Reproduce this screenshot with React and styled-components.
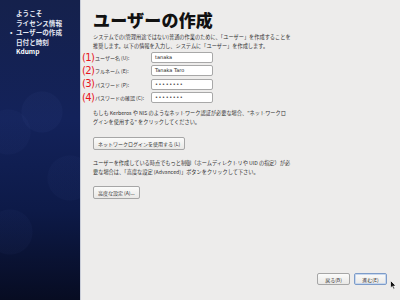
import React from 'react'
import styled, { createGlobalStyle } from 'styled-components'

const Global = createGlobalStyle`
  body {
    margin: 0;
    font-family: "Noto Sans CJK JP", "DejaVu Sans", sans-serif;
  }
`

const Screen = styled.div`
  display: flex;
  width: 400px;
  height: 300px;
  overflow: hidden;
  background: #edeceb;
`

const Sidebar = styled.nav`
  width: 80px;
  flex: none;
  display: flex;
  flex-direction: column;
  gap: 0.5px;
  padding-top: 9px;
  box-sizing: border-box;
  background:
    radial-gradient(circle at 42px 112px, rgba(70, 90, 160, 0.08) 0 20px, transparent 21px),
    radial-gradient(circle at 8px 132px, rgba(70, 90, 160, 0.06) 0 22px, transparent 23px),
    radial-gradient(circle at 70px 178px, rgba(70, 90, 160, 0.06) 0 22px, transparent 23px),
    radial-gradient(circle at 10px 232px, rgba(70, 90, 160, 0.06) 0 22px, transparent 23px),
    linear-gradient(180deg, #15214c 0%, #13225a 40%, #0d1a48 70%, #070c22 100%);
`

const Step = styled.div`
  position: relative;
  padding-left: 16px;
  height: 9px;
  line-height: 9px;
  font-size: 6.6px;
  font-weight: bold;
  color: ${p => (p.$strong ? '#ffffff' : '#e4e8f2')};
  white-space: nowrap;

  &::before {
    content: ${p => (p.$current ? "'•'" : "''")};
    position: absolute;
    left: 10px;
  }
`

const Main = styled.main`
  flex: 1;
  display: flex;
  flex-direction: column;
  border-left: 1px solid #c9cdd8;
  padding: 8px 13px 15px 12px;
  color: #333;
`

const Title = styled.h1`
  margin: 0;
  font-size: 17px;
  line-height: 24px;
  font-weight: 900;
  color: #111;
  letter-spacing: 0.2px;
`

const Text = styled.p`
  margin: ${p => p.$top || 0}px 0 0;
  font-size: 5.2px;
  line-height: 8.5px;
  white-space: nowrap;
`

const Form = styled.div`
  display: grid;
  grid-template-columns: 12px 57px 62px;
  grid-auto-rows: 13.3px;
  align-items: center;
  margin: 1px 0 0 -11px;
`

const Mark = styled.span`
  font-family: "DejaVu Sans", sans-serif;
  font-size: 10px;
  color: #e8141c;
  line-height: 1;
  letter-spacing: -0.6px;
`

const Label = styled.label`
  font-size: 5px;
  padding-left: 1px;
  white-space: nowrap;
`

const Field = styled.div`
  height: 11px;
  box-sizing: border-box;
  border: 1px solid #a8a8a8;
  border-radius: 2px;
  background: #fff;
  font-family: "DejaVu Sans", sans-serif;
  font-size: 5px;
  line-height: 9px;
  padding-left: 3px;
  color: #222;
  letter-spacing: ${p => (p.$secret ? '0.6px' : '0')};
`

const Button = styled.button`
  display: block;
  height: 13px;
  padding: 0 4px;
  margin-top: ${p => p.$top || 0}px;
  align-self: flex-start;
  box-sizing: border-box;
  border: 1px solid ${p => (p.$focus ? '#7d9cc9' : '#a6a6a6')};
  border-radius: 2px;
  background: linear-gradient(#fbfbfa, #e9e8e6);
  font-family: "Noto Sans CJK JP", sans-serif;
  font-size: 5px;
  color: #333;
  white-space: nowrap;
  box-shadow: ${p => (p.$focus ? 'inset 0 0 0 1px #c7d7ee' : 'none')};
`

const Footer = styled.div`
  margin-top: auto;
  display: flex;
  justify-content: flex-end;
  gap: 4px;
  position: relative;
`

const NavButton = styled(Button)`
  width: 33px;
  height: 12px;
  padding: 0;
`

const Cursor = styled.svg`
  position: absolute;
  right: -10px;
  top: 7px;
`

const steps = [
  { label: 'ようこそ' },
  { label: 'ライセンス情報' },
  { label: 'ユーザーの作成', current: true },
  { label: '日付と時刻' },
  { label: 'Kdump', strong: true },
]

const fields = [
  { n: '(1)', label: 'ユーザー名 (U):', value: 'tanaka' },
  { n: '(2)', label: 'フルネーム (E):', value: 'Tanaka Taro' },
  { n: '(3)', label: 'パスワード (P):', value: '••••••••', secret: true },
  { n: '(4)', label: 'パスワードの確認 (C):', value: '••••••••', secret: true },
]

const App = () => (
  <Screen>
    <Global />
    <Sidebar>
      {steps.map(s => (
        <Step key={s.label} $current={s.current} $strong={s.strong}>{s.label}</Step>
      ))}
    </Sidebar>
    <Main>
      <Title>ユーザーの作成</Title>
      <Text $top={1}>
        システムでの(管理用途ではない)普通の作業のために、「ユーザー」を作成することを<br />
        推奨します。以下の情報を入力し、システムに「ユーザー」を作成します。
      </Text>
      <Form>
        {fields.map(f => (
          <React.Fragment key={f.n}>
            <Mark>{f.n}</Mark>
            <Label>{f.label}</Label>
            <Field $secret={f.secret}>{f.value}</Field>
          </React.Fragment>
        ))}
      </Form>
      <Text $top={5}>
        もしも Kerberos や NIS のようなネットワーク認証が必要な場合、"ネットワークロ<br />
        グインを使用する" をクリックしてください。
      </Text>
      <Button $top={11}>ネットワークログインを使用する (L)</Button>
      <Text $top={9}>
        ユーザーを作成している時点でもっと制御（ホームディレクトリや UID の指定）が必<br />
        要な場合は、「高度な設定 (Advanced)」ボタンをクリックして下さい。
      </Text>
      <Button $top={10}>高度な設定 (A)...</Button>
      <Footer>
        <NavButton>戻る(B)</NavButton>
        <NavButton $focus>進む(E)</NavButton>
        <Cursor width="7" height="10" viewBox="0 0 7 10">
          <path d="M0.5 0.5 L0.5 8 L2.3 6.4 L3.6 9.3 L4.8 8.8 L3.6 6 L6 6 Z" fill="#111" stroke="#fff" strokeWidth="0.7" />
        </Cursor>
      </Footer>
    </Main>
  </Screen>
)

export default App
